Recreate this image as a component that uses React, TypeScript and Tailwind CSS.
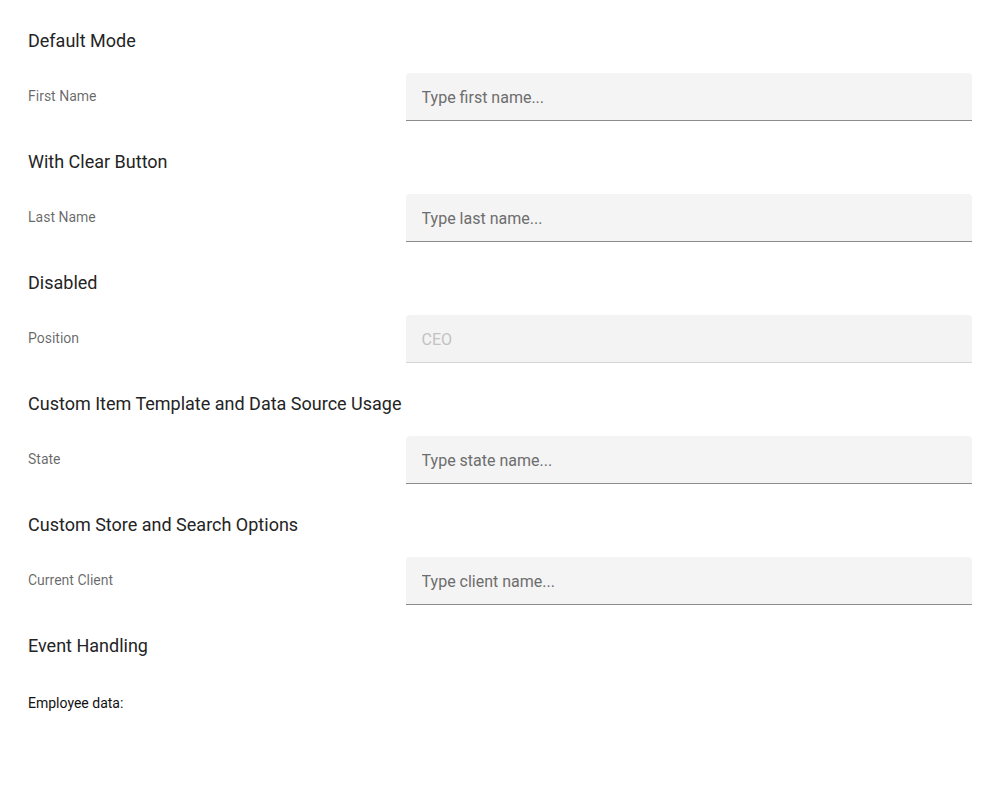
import React from "react";

function Field({ label, placeholder, disabled, value }: { label: string; placeholder?: string; disabled?: boolean; value?: string }) {
  return (
    <div className="flex items-center">
      <div className="w-[40%] text-[14px] leading-[16px] text-[rgba(0,0,0,0.6)] -mt-[3px]">{label}</div>
      <div className="w-[60%]">
        {disabled ? (
          <div className="h-[48px] rounded-t-[4px] bg-[#f3f3f3] border-b border-[#d6d6d6] flex items-center px-[16px] pt-[2px] text-[16px] text-[#c2c2c2]">
            {value}
          </div>
        ) : (
          <input
            placeholder={placeholder}
            className="w-full h-[48px] rounded-t-[4px] bg-[#f4f4f4] border-b border-[#8c8c8c] px-[16px] pt-[2px] text-[16px] text-[#222] placeholder:text-[#6d6d6d] outline-none"
          />
        )}
      </div>
    </div>
  );
}

function Section({ title, children }: { title: string; children: React.ReactNode }) {
  return (
    <div className="mb-[29px]">
      <div className="text-[18px] leading-[24px] text-[#242424] mb-[20px]">{title}</div>
      {children}
    </div>
  );
}

export default function App() {
  return (
    <div className="bg-white min-h-[800px] px-[28px] pt-[29px] font-['Roboto',sans-serif]">
      <Section title="Default Mode">
        <Field label="First Name" placeholder="Type first name..." />
      </Section>
      <Section title="With Clear Button">
        <Field label="Last Name" placeholder="Type last name..." />
      </Section>
      <Section title="Disabled">
        <Field label="Position" disabled value="CEO" />
      </Section>
      <Section title="Custom Item Template and Data Source Usage">
        <Field label="State" placeholder="Type state name..." />
      </Section>
      <Section title="Custom Store and Search Options">
        <Field label="Current Client" placeholder="Type client name..." />
      </Section>
      <Section title="Event Handling">
        <div className="text-[14px] leading-[16px] text-[#111] mt-[37px]">Employee data:</div>
      </Section>
    </div>
  );
}
